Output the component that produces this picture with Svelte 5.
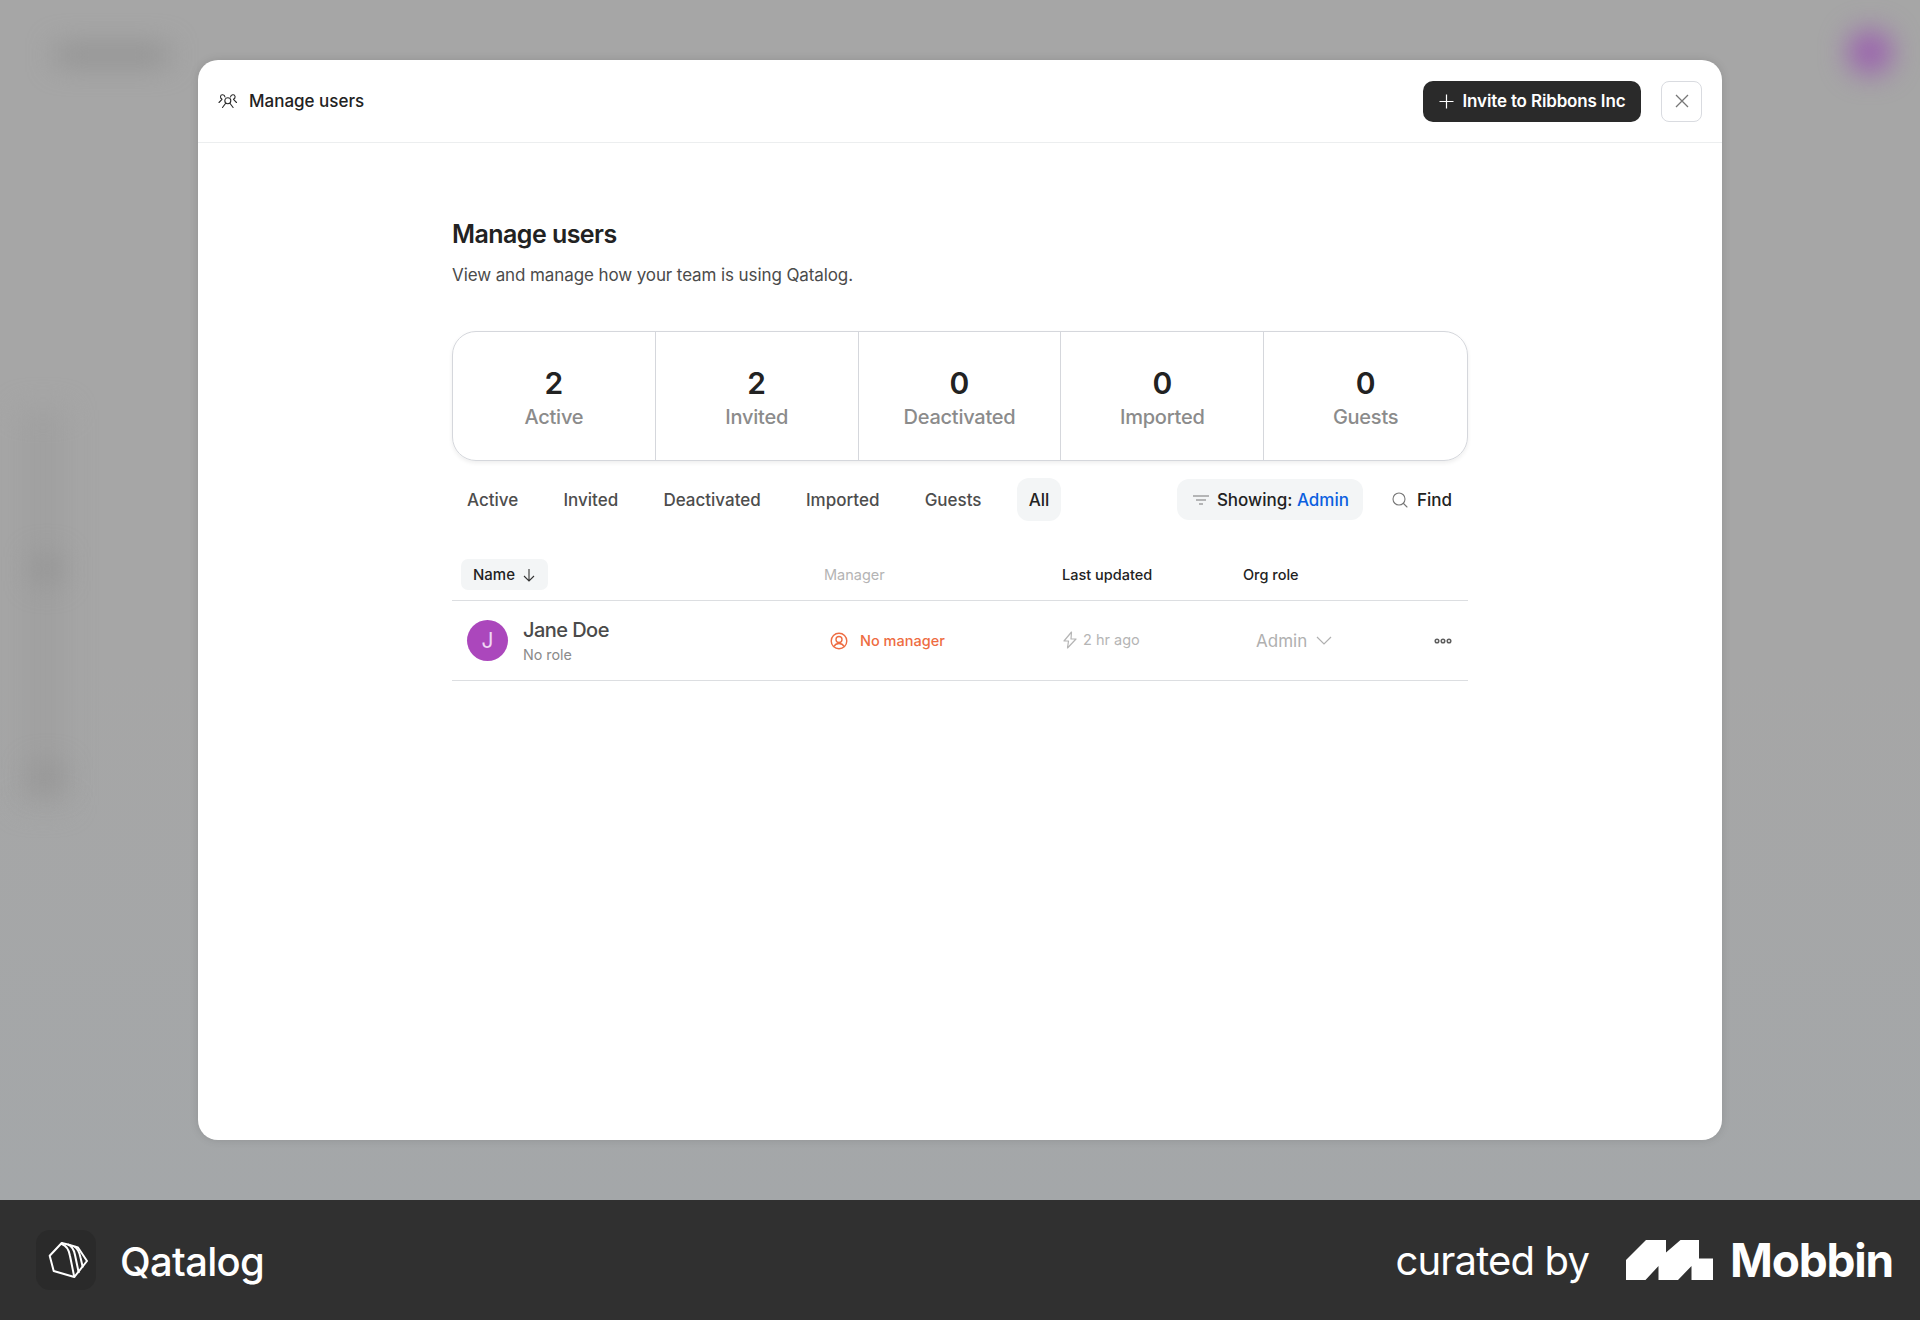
<script>
  const stats = [
    { n: 2, label: 'Active' },
    { n: 2, label: 'Invited' },
    { n: 0, label: 'Deactivated' },
    { n: 0, label: 'Imported' },
    { n: 0, label: 'Guests' }
  ];
  const tabs = ['Active', 'Invited', 'Deactivated', 'Imported', 'Guests', 'All'];
</script>

<div class="page">
  <div class="stage">
    <div class="blur b-logo"></div>
    <div class="blur b-side"></div>
    <div class="blur b-side2"></div>
    <div class="blur b-side3"></div>
    <div class="blur b-avatar"></div>

    <section class="modal">
      <header class="bar">
        <div class="bar-title">
          <svg width="20" height="16" viewBox="0 0 19 16" fill="none" stroke="#2a2a2a" stroke-width="1.1" stroke-linecap="round" stroke-linejoin="round">
            <circle cx="9.300" cy="7.700" r="3"/>
            <path d="M7 10.500 4 14.500M11.600 10.500l3 4"/>
            <path d="M6.500 4C6 1.500 2.500.8 2 3.500 1.800 5 3 6 3.500 6.300L.5 9.500"/>
            <path d="M12 4c.5-2.500 4-3.200 4.600-.5.2 1.500-1 2.500-1.600 2.800l3 3.200"/>
          </svg>
          <span>Manage users</span>
        </div>
        <div class="bar-actions">
          <button class="invite">
            <svg width="15" height="15" viewBox="0 0 15 15" fill="none" stroke="#fff" stroke-width="1.2"><path d="M7.500 0.500v14M0.500 7.500h14"/></svg>
            Invite to Ribbons Inc
          </button>
          <button class="close" aria-label="Close">
            <svg width="14" height="14" viewBox="0 0 14 14" fill="none" stroke="#777" stroke-width="1.3"><path d="M1 1l12 12M13 1 1 13"/></svg>
          </button>
        </div>
      </header>

      <div class="body">
        <h1>Manage users</h1>
        <p class="sub">View and manage how your team is using Qatalog.</p>

        <div class="stats">
          {#each stats as s}
            <div class="stat">
              <div class="num">{s.n}</div>
              <div class="lbl">{s.label}</div>
            </div>
          {/each}
        </div>

        <div class="toolbar">
          <div class="tabs">
            {#each tabs as t}
              <span class="tab" class:on={t === 'All'}>{t}</span>
            {/each}
          </div>
          <div class="tools">
            <span class="showing">
              <svg width="16" height="10" viewBox="0 0 16 10" fill="none" stroke="#777" stroke-width="1.1"><path d="M0 1h16M3 5h10M6 9h4"/></svg>
              <span>Showing: <b>Admin</b></span>
            </span>
            <span class="find">
              <svg width="16" height="16" viewBox="0 0 16 16" fill="none" stroke="#777" stroke-width="1.1" stroke-linecap="round"><circle cx="7" cy="7" r="6"/><path d="M11.500 11.500l3.500 3.500"/></svg>
              <span>Find</span>
            </span>
          </div>
        </div>

        <div class="thead grid">
          <div><span class="sort">Name
            <svg width="12" height="14" viewBox="0 0 12 14" fill="none" stroke="#333" stroke-width="1.1"><path d="M6 1v12M1 8l5 5 5-5"/></svg>
          </span></div>
          <div class="muted">Manager</div>
          <div>Last updated</div>
          <div>Org role</div>
        </div>

        <div class="row grid">
          <div class="who">
            <span class="avatar">J</span>
            <div>
              <div class="name">Jane Doe</div>
              <div class="role">No role</div>
            </div>
          </div>
          <div class="mgr">
            <svg width="18" height="18" viewBox="0 0 18 18" fill="none" stroke="#ee6c42" stroke-width="1.400"><circle cx="9" cy="9" r="7.800"/><circle cx="9" cy="7.500" r="3"/><path d="M4 14.500c1-2.200 3-3 5-3s4 .8 5 3"/></svg>
            <span>No manager</span>
          </div>
          <div class="upd">
            <svg width="14" height="18" viewBox="0 0 14 18" fill="none" stroke="#b5b5b5" stroke-width="1.200" stroke-linejoin="round"><path d="M8.500 1 1 10h4.500L4.500 17 13 8H8z"/></svg>
            <span>2 hr ago</span>
          </div>
          <div class="org">
            <span class="admin">Admin
              <svg width="16" height="9" viewBox="0 0 16 9" fill="none" stroke="#b0b0b0" stroke-width="1.200"><path d="M1 1l7 7 7-7"/></svg>
            </span>
            <svg class="dots" width="18" height="6" viewBox="0 0 18 6" fill="none" stroke="#5f5f5f" stroke-width="1.500"><circle cx="3" cy="3" r="1.800"/><circle cx="9" cy="3" r="1.800"/><circle cx="15" cy="3" r="1.800"/></svg>
          </div>
        </div>
      </div>
    </section>
  </div>

  <footer class="foot">
    <div class="brand">
      <span class="logo">
        <svg width="50" height="50" viewBox="0 0 50 50" fill="none" stroke="#fff" stroke-width="2" stroke-linejoin="round">
          <path d="M20.700 8 8.700 20.700 12.700 36l20.600 6c-1.500-7-3-15-4.300-21-1-6-3.500-10.500-8.300-12z"/>
          <path d="M20.700 8 27 9.500l10 3L46 26 33.300 42"/>
          <path d="M27 9.500c4 1.500 6 5.500 7 10.500l3.800 18"/>
          <path d="M33.500 11.500c3 2 5 6 6 11l2.300 10"/>
        </svg>
      </span>
      <span class="qat">Qatalog</span>
    </div>
    <div class="curated">
      <span class="by">curated by</span>
      <svg class="mlogo" width="87" height="40" viewBox="0 0 87 40" fill="#fff"><path d="M0 40V20L20 0h20v12.500L54.500 0H73v18.500h14V40H65.500V26L52 40H32.500V26L19.500 40z"/></svg>
      <span class="mob">Mobbin</span>
    </div>
  </footer>
</div>

<style>
  :global(body) { margin: 0; }
  .page {
    width: 1920px;
    height: 1320px;
    display: flex;
    flex-direction: column;
    font-family: Inter, "Liberation Sans", sans-serif;
    overflow: hidden;
  }
  .stage {
    position: relative;
    height: 1200px;
    box-sizing: border-box;
    padding: 60px 198px;
    background: linear-gradient(180deg, #a6a6a6 0%, #a6a6a6 55%, #a4a7a9 100%);
    overflow: hidden;
  }
  .blur { position: absolute; filter: blur(14px); }
  .b-logo { left: 56px; top: 46px; width: 112px; height: 18px; background: #8f8f8f; }
  .b-side { left: 20px; top: 410px; width: 46px; height: 395px; background: #a0a0a0; }
  .b-side2 { left: 34px; top: 556px; width: 26px; height: 26px; background: #939393; }
  .b-side3 { left: 32px; top: 766px; width: 30px; height: 22px; background: #939393; }
  .b-avatar { left: 1848px; top: 30px; width: 44px; height: 44px; border-radius: 50%; background: #9a5fae; }

  .modal {
    position: relative;
    height: 1080px;
    background: #fff;
    border-radius: 20px;
    box-shadow: 0 0 10px rgba(0,0,0,.12);
  }
  .bar {
    height: 83px;
    box-sizing: border-box;
    border-bottom: 1px solid #eceeef;
    display: flex;
    align-items: center;
    justify-content: space-between;
    padding: 0 20px;
  }
  .bar-title { display: flex; align-items: center; gap: 11px; font-size: 17px; font-weight: 500; color: #222; }
  .bar-actions { display: flex; align-items: center; gap: 20px; }
  button { font-family: inherit; cursor: pointer; }
  .invite {
    height: 41px;
    width: 218px;
    display: flex;
    align-items: center;
    justify-content: center;
    gap: 9px;
    background: #2a2a2a;
    color: #fff;
    border: 0;
    border-radius: 10px;
    font-size: 17px;
    font-weight: 600;
    letter-spacing: -0.15px;
    padding: 0;
  }
  .close {
    width: 41px;
    height: 41px;
    display: grid;
    place-items: center;
    background: #fff;
    border: 1px solid #d9dbe0;
    border-radius: 8px;
    padding: 0;
  }
  .body { width: 1016px; margin: 0 auto; padding-top: 75px; }
  h1 { margin: 0; font-size: 25px; line-height: 32px; font-weight: 600; letter-spacing: -0.55px; color: #222; }
  .sub { margin: 13px 0 0; font-size: 17px; line-height: 24px; letter-spacing: -0.1px; color: #4b4b4b; }
  .stats {
    margin-top: 44px;
    height: 130px;
    box-sizing: border-box;
    display: grid;
    grid-template-columns: repeat(5, 1fr);
    border: 1px solid #d5d7dc;
    border-radius: 24px;
    box-shadow: 0 2px 4px rgba(0,0,0,.07);
  }
  .stat {
    display: flex;
    flex-direction: column;
    align-items: center;
    justify-content: center;
    padding-top: 3px;
    border-right: 1px solid #d5d7dc;
  }
  .stat:last-child { border-right: 0; }
  .num { font-size: 30px; line-height: 36px; font-weight: 600; color: #222; }
  .lbl { margin-top: 3px; font-size: 20px; line-height: 26px; font-weight: 500; letter-spacing: -0.25px; color: #8b8b8b; }

  .toolbar {
    margin-top: 17px;
    display: flex;
    align-items: center;
    justify-content: space-between;
    height: 43px;
  }
  .tabs { display: flex; gap: 21.2px; padding-left: 3px; }
  .tab {
    height: 43px;
    display: flex;
    align-items: center;
    padding: 0 12px;
    border-radius: 12px;
    font-size: 17px;
    font-weight: 500;
    color: #4d4d4d;
  }
  .tab.on { background: #f3f5f6; color: #222; margin-left: 2px; }
  .tools { display: flex; align-items: center; gap: 29px; padding-right: 16px; }
  .showing {
    height: 41px;
    display: flex;
    align-items: center;
    gap: 8px;
    padding: 0 14px 0 16px;
    background: #f3f5f6;
    border-radius: 12px;
    font-size: 17px;
    font-weight: 500;
    color: #222;
  }
  .showing b { font-weight: 500; color: #0b5fe0; }
  .find { display: flex; align-items: center; gap: 9px; font-size: 17px; font-weight: 500; color: #222; }

  .grid { display: grid; grid-template-columns: 372px 238px 181px 1fr; align-items: center; }
  .thead {
    margin-top: 38px;
    height: 42px;
    box-sizing: border-box;
    padding-bottom: 10px;
    border-bottom: 1px solid #dcdee1;
    font-size: 14.5px;
    font-weight: 500;
    color: #222;
  }
  .sort {
    display: inline-flex;
    align-items: center;
    gap: 8px;
    height: 31px;
    margin-left: 9px;
    padding: 0 13px 0 12px;
    background: #f3f5f6;
    border-radius: 7px;
    font-size: 15px;
  }
  .muted { color: #b4b4b4; font-weight: 400; }
  .row { height: 80px; border-bottom: 1px solid #dcdee1; box-sizing: border-box; }
  .who { display: flex; align-items: center; gap: 15px; padding-left: 15px; }
  .avatar {
    width: 41px;
    height: 41px;
    border-radius: 50%;
    background: #ab47bc;
    color: #f0d8f4;
    display: grid;
    place-items: center;
    font-size: 21px;
  }
  .name { font-size: 20px; line-height: 26px; font-weight: 500; letter-spacing: -0.55px; color: #4a4a4a; }
  .role { font-size: 14.3px; line-height: 20px; color: #8b8b8b; margin-top: 2px; }
  .mgr { display: flex; align-items: center; gap: 12px; padding-left: 6px; font-size: 14.5px; font-weight: 500; color: #ee6c42; }
  .upd { display: flex; align-items: center; gap: 6px; padding: 0 0 2px 1px; font-size: 14.5px; color: #b5b5b5; }
  .org { display: flex; align-items: center; justify-content: space-between; padding: 0 16px 0 13px; }
  .admin { display: flex; align-items: center; gap: 9px; font-size: 17px; color: #b0b0b0; }

  .foot {
    height: 120px;
    background: #303030;
    display: flex;
    align-items: center;
    justify-content: space-between;
    padding: 0 27px 0 36px;
    color: #fff;
  }
  .brand { display: flex; align-items: center; gap: 24px; }
  .logo {
    width: 60px;
    height: 60px;
    border-radius: 14px;
    background: #2a2a2a;
    display: grid;
    place-items: center;
  }
  .qat { font-size: 40px; font-weight: 500; letter-spacing: -0.7px; padding-top: 2px; }
  .curated { display: flex; align-items: center; }
  .by { font-size: 40px; font-weight: 400; letter-spacing: -0.85px; margin-right: 37px; }
  .mob { font-size: 46px; font-weight: 700; letter-spacing: -1.2px; margin-left: 17px; }
</style>
